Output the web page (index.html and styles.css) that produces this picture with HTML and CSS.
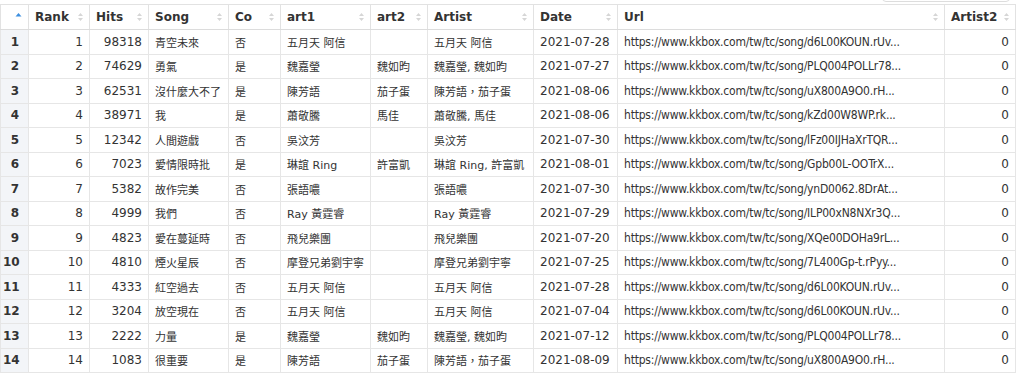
FILE: index.html
```html
<!DOCTYPE html>
<html>
<head>
<meta charset="utf-8">
<link rel="stylesheet" href="styles.css">
</head>
<body>
<div class="topbar"><div class="search"></div></div>
<table class="grid">
<colgroup>
<col class="c-idx"><col class="c-rank"><col class="c-hits"><col class="c-song"><col class="c-co"><col class="c-art1"><col class="c-art2"><col class="c-artist"><col class="c-date"><col class="c-url"><col class="c-artist2">
</colgroup>
<thead>
<tr>
<th class="idx"><div class="hd"><span></span><svg class="sort" width="7" height="10" viewBox="0 0 7 10"><path d="M0.5 4.5 L3.5 1 L6.5 4.5 Z" fill="#3d8fe0"/></svg></div></th>
<th><div class="hd"><span>Rank</span><svg class="sort" width="5" height="10" viewBox="0 0 5 10"><path d="M0 4 L2.5 1 L5 4 Z M0 6 L2.5 9 L5 6 Z" fill="#d6d6d6"/></svg></div></th>
<th><div class="hd"><span>Hits</span><svg class="sort" width="5" height="10" viewBox="0 0 5 10"><path d="M0 4 L2.5 1 L5 4 Z M0 6 L2.5 9 L5 6 Z" fill="#d6d6d6"/></svg></div></th>
<th><div class="hd"><span>Song</span><svg class="sort" width="5" height="10" viewBox="0 0 5 10"><path d="M0 4 L2.5 1 L5 4 Z M0 6 L2.5 9 L5 6 Z" fill="#d6d6d6"/></svg></div></th>
<th><div class="hd"><span>Co</span><svg class="sort" width="5" height="10" viewBox="0 0 5 10"><path d="M0 4 L2.5 1 L5 4 Z M0 6 L2.5 9 L5 6 Z" fill="#d6d6d6"/></svg></div></th>
<th><div class="hd"><span>art1</span><svg class="sort" width="5" height="10" viewBox="0 0 5 10"><path d="M0 4 L2.5 1 L5 4 Z M0 6 L2.5 9 L5 6 Z" fill="#d6d6d6"/></svg></div></th>
<th><div class="hd"><span>art2</span><svg class="sort" width="5" height="10" viewBox="0 0 5 10"><path d="M0 4 L2.5 1 L5 4 Z M0 6 L2.5 9 L5 6 Z" fill="#d6d6d6"/></svg></div></th>
<th><div class="hd"><span>Artist</span><svg class="sort" width="5" height="10" viewBox="0 0 5 10"><path d="M0 4 L2.5 1 L5 4 Z M0 6 L2.5 9 L5 6 Z" fill="#d6d6d6"/></svg></div></th>
<th><div class="hd"><span>Date</span><svg class="sort" width="5" height="10" viewBox="0 0 5 10"><path d="M0 4 L2.5 1 L5 4 Z M0 6 L2.5 9 L5 6 Z" fill="#d6d6d6"/></svg></div></th>
<th><div class="hd"><span>Url</span><svg class="sort" width="5" height="10" viewBox="0 0 5 10"><path d="M0 4 L2.5 1 L5 4 Z M0 6 L2.5 9 L5 6 Z" fill="#d6d6d6"/></svg></div></th>
<th><div class="hd"><span>Artist2</span><svg class="sort" width="5" height="10" viewBox="0 0 5 10"><path d="M0 4 L2.5 1 L5 4 Z M0 6 L2.5 9 L5 6 Z" fill="#d6d6d6"/></svg></div></th>
</tr>
</thead>
<tbody>
<tr><td class="idx">1</td><td class="num">1</td><td class="num">98318</td><td class="t">青空未來</td><td class="t">否</td><td class="t">五月天 阿信</td><td class="t"></td><td class="t">五月天 阿信</td><td>2021-07-28</td><td class="url">https://www.kkbox.com/tw/tc/song/d6L00KOUN.rUv...</td><td class="num">0</td></tr>
<tr><td class="idx">2</td><td class="num">2</td><td class="num">74629</td><td class="t">勇氣</td><td class="t">是</td><td class="t">魏嘉瑩</td><td class="t">魏如昀</td><td class="t">魏嘉瑩, 魏如昀</td><td>2021-07-27</td><td class="url">https://www.kkbox.com/tw/tc/song/PLQ004POLLr78...</td><td class="num">0</td></tr>
<tr><td class="idx">3</td><td class="num">3</td><td class="num">62531</td><td class="t">沒什麼大不了</td><td class="t">是</td><td class="t">陳芳語</td><td class="t">茄子蛋</td><td class="t">陳芳語，茄子蛋</td><td>2021-08-06</td><td class="url">https://www.kkbox.com/tw/tc/song/uX800A9O0.rH...</td><td class="num">0</td></tr>
<tr><td class="idx">4</td><td class="num">4</td><td class="num">38971</td><td class="t">我</td><td class="t">是</td><td class="t">蕭敬騰</td><td class="t">馬佳</td><td class="t">蕭敬騰, 馬佳</td><td>2021-08-06</td><td class="url">https://www.kkbox.com/tw/tc/song/kZd00W8WP.rk...</td><td class="num">0</td></tr>
<tr><td class="idx">5</td><td class="num">5</td><td class="num">12342</td><td class="t">人間遊戲</td><td class="t">否</td><td class="t">吳汶芳</td><td class="t"></td><td class="t">吳汶芳</td><td>2021-07-30</td><td class="url">https://www.kkbox.com/tw/tc/song/lFz00IJHaXrTQR...</td><td class="num">0</td></tr>
<tr><td class="idx">6</td><td class="num">6</td><td class="num">7023</td><td class="t">愛情限時批</td><td class="t">是</td><td class="t">琳誼 Ring</td><td class="t">許富凱</td><td class="t">琳誼 Ring, 許富凱</td><td>2021-08-01</td><td class="url">https://www.kkbox.com/tw/tc/song/Gpb00L-OOTrX...</td><td class="num">0</td></tr>
<tr><td class="idx">7</td><td class="num">7</td><td class="num">5382</td><td class="t">故作完美</td><td class="t">否</td><td class="t">張語噥</td><td class="t"></td><td class="t">張語噥</td><td>2021-07-30</td><td class="url">https://www.kkbox.com/tw/tc/song/ynD0062.8DrAt...</td><td class="num">0</td></tr>
<tr><td class="idx">8</td><td class="num">8</td><td class="num">4999</td><td class="t">我們</td><td class="t">否</td><td class="t">Ray 黃霆睿</td><td class="t"></td><td class="t">Ray 黃霆睿</td><td>2021-07-29</td><td class="url">https://www.kkbox.com/tw/tc/song/ILP00xN8NXr3Q...</td><td class="num">0</td></tr>
<tr><td class="idx">9</td><td class="num">9</td><td class="num">4823</td><td class="t">愛在蔓延時</td><td class="t">否</td><td class="t">飛兒樂團</td><td class="t"></td><td class="t">飛兒樂團</td><td>2021-07-20</td><td class="url">https://www.kkbox.com/tw/tc/song/XQe00DOHa9rL...</td><td class="num">0</td></tr>
<tr><td class="idx">10</td><td class="num">10</td><td class="num">4810</td><td class="t">煙火星辰</td><td class="t">否</td><td class="t">摩登兄弟劉宇寧</td><td class="t"></td><td class="t">摩登兄弟劉宇寧</td><td>2021-07-25</td><td class="url">https://www.kkbox.com/tw/tc/song/7L400Gp-t.rPyy...</td><td class="num">0</td></tr>
<tr><td class="idx">11</td><td class="num">11</td><td class="num">4333</td><td class="t">紅空過去</td><td class="t">否</td><td class="t">五月天 阿信</td><td class="t"></td><td class="t">五月天 阿信</td><td>2021-07-28</td><td class="url">https://www.kkbox.com/tw/tc/song/d6L00KOUN.rUv...</td><td class="num">0</td></tr>
<tr><td class="idx">12</td><td class="num">12</td><td class="num">3204</td><td class="t">放空現在</td><td class="t">否</td><td class="t">五月天 阿信</td><td class="t"></td><td class="t">五月天 阿信</td><td>2021-07-04</td><td class="url">https://www.kkbox.com/tw/tc/song/d6L00KOUN.rUv...</td><td class="num">0</td></tr>
<tr><td class="idx">13</td><td class="num">13</td><td class="num">2222</td><td class="t">力量</td><td class="t">是</td><td class="t">魏嘉瑩</td><td class="t">魏如昀</td><td class="t">魏嘉瑩, 魏如昀</td><td>2021-07-12</td><td class="url">https://www.kkbox.com/tw/tc/song/PLQ004POLLr78...</td><td class="num">0</td></tr>
<tr><td class="idx">14</td><td class="num">14</td><td class="num">1083</td><td class="t">很重要</td><td class="t">是</td><td class="t">陳芳語</td><td class="t">茄子蛋</td><td class="t">陳芳語，茄子蛋</td><td>2021-08-09</td><td class="url">https://www.kkbox.com/tw/tc/song/uX800A9O0.rH...</td><td class="num">0</td></tr>
</tbody>
</table>
</body>
</html>
```

FILE: styles.css
```css
html, body {
  margin: 0;
  padding: 0;
  background: #ffffff;
}
body {
  font-family: "DejaVu Sans", "Noto Sans CJK TC", sans-serif;
  font-size: 12px;
  color: #333333;
}
.topbar {
  height: 4px;
  display: flex;
  justify-content: flex-end;
  align-items: flex-end;
  overflow: hidden;
}
.search {
  flex-shrink: 0;
  width: 126px;
  height: 20px;
  margin-right: 14px;
  margin-bottom: 2px;
  border: 1px solid #dddddd;
  border-radius: 4px;
}
.grid {
  border-collapse: collapse;
  table-layout: fixed;
  width: 1015px;
  border: 1px solid #e2e2e2;
}
.c-idx { width: 28px; }
.c-rank { width: 61px; }
.c-hits { width: 59px; }
.c-song { width: 80px; }
.c-co { width: 52px; }
.c-art1 { width: 90px; }
.c-art2 { width: 57px; }
.c-artist { width: 106px; }
.c-date { width: 84px; }
.c-url { width: 327px; }
.c-artist2 { width: 71px; }
th {
  height: 24px;
  padding: 0 6px;
  font-weight: bold;
  text-align: left;
  border: 1px solid #e2e2e2;
  border-bottom: 1px solid #dcdcdc;
  background: #ffffff;
}
.hd {
  display: flex;
  align-items: center;
  justify-content: space-between;
  white-space: nowrap;
}
.sort {
  flex-shrink: 0;
  display: block;
}
td {
  height: 23.5px;
  padding: 0 6px;
  border: 1px solid #e6e6e6;
  white-space: nowrap;
  overflow: hidden;
}
td.t {
  font-size: 11px;
}
td.url {
  font-family: "DejaVu Sans Condensed", "DejaVu Sans", sans-serif;
  letter-spacing: -0.2px;
}
td.num {
  text-align: right;
  padding-right: 6px;
}
td.idx {
  background: #f3f5f8;
  font-weight: bold;
  text-align: right;
  padding-right: 9px;
  padding-left: 2px;
}
th.idx {
  background: #ffffff;
}
```
